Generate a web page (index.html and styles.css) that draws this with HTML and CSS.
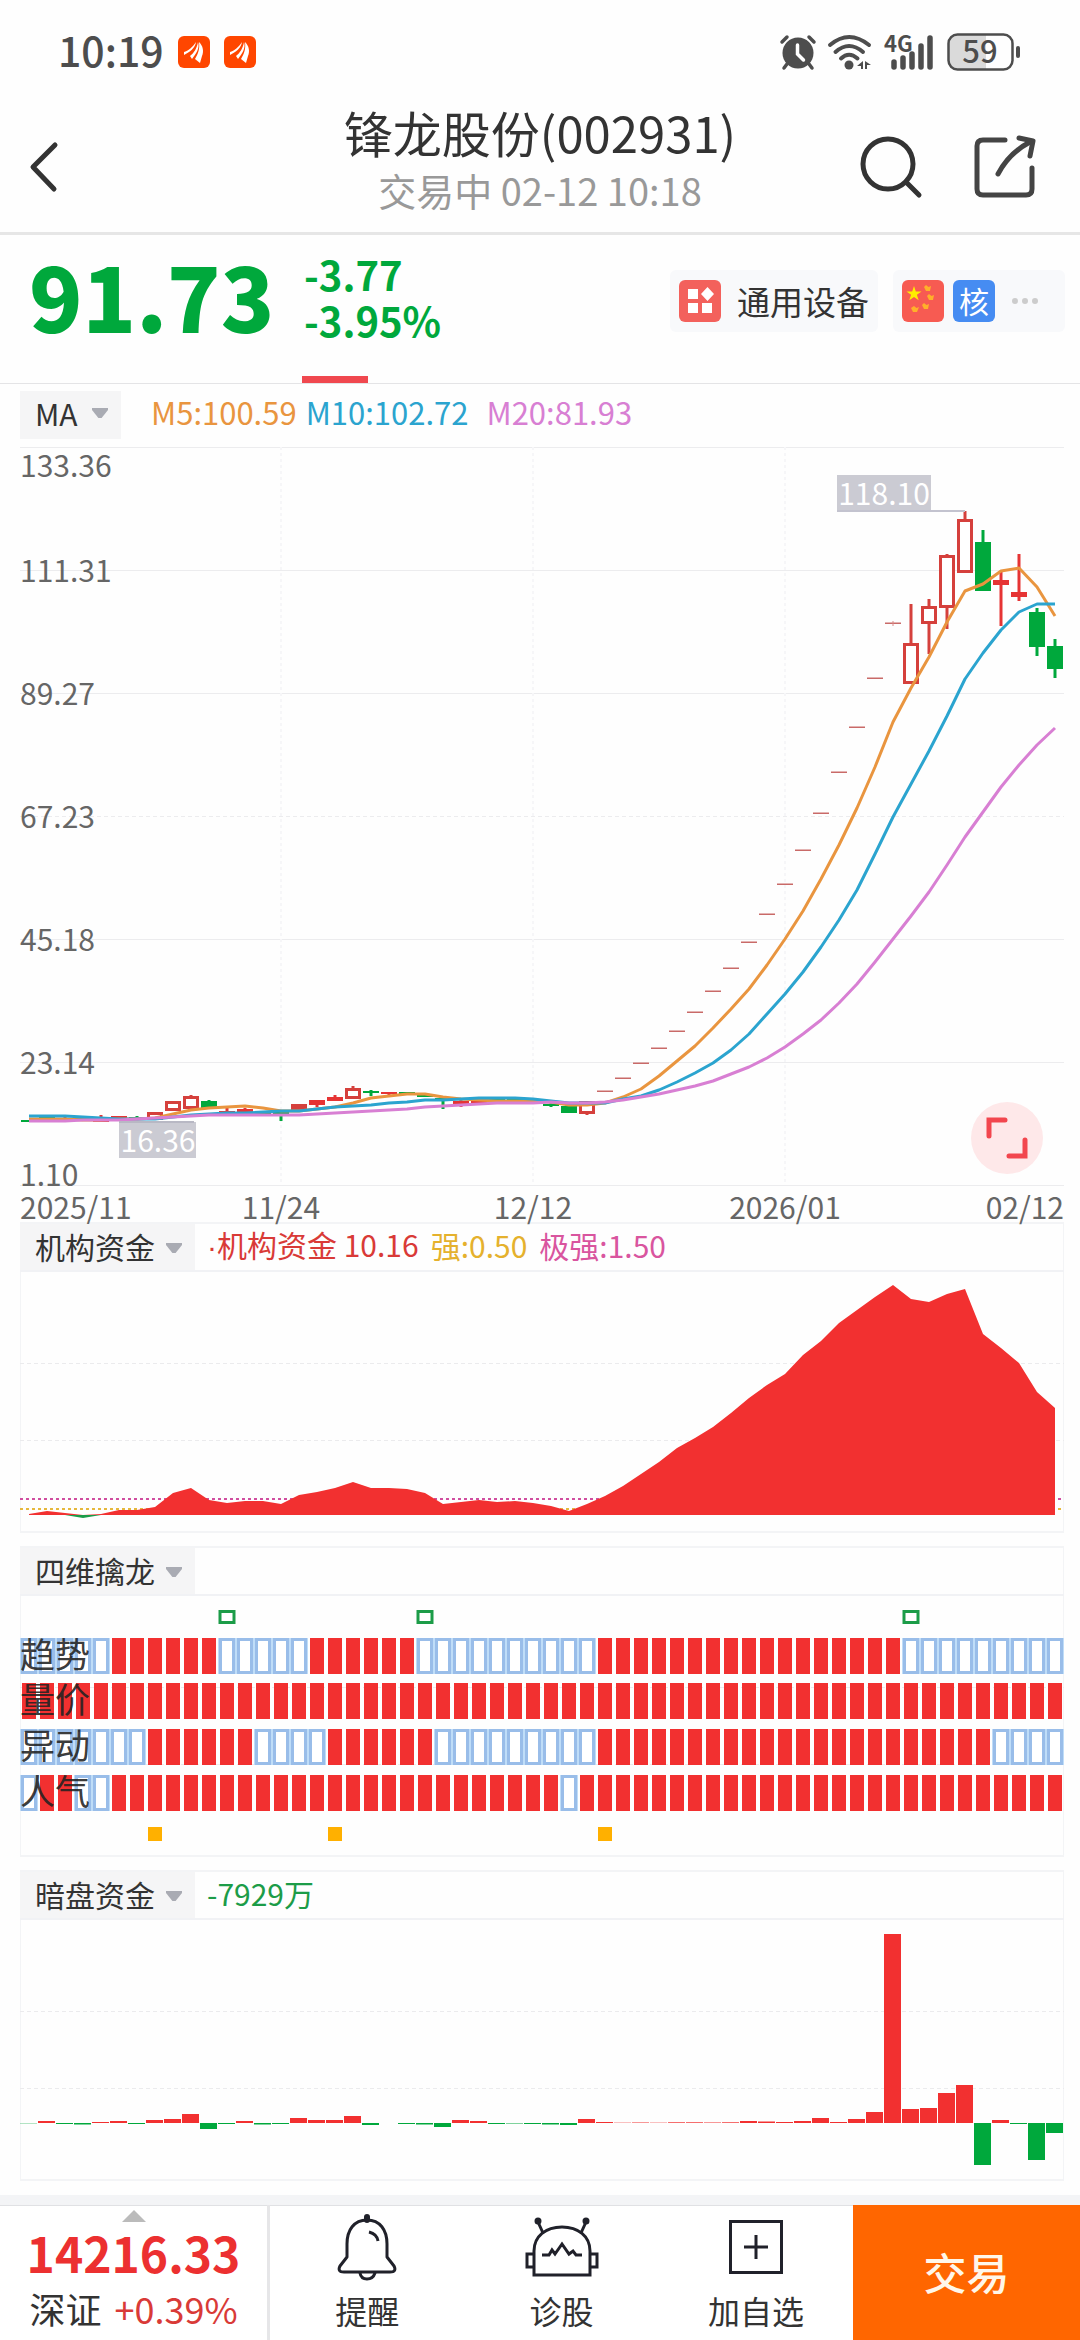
FILE: index.html
```
<!doctype html>
<html lang="zh-CN">
 <head>
  <meta charset="utf-8">
  <meta name="viewport" content="width=device-width, initial-scale=1.0">
  <title>锋龙股份(002931)</title>
  <link rel="stylesheet" href="styles.css">
 </head>
 <body>
  <header class="top">
   <div class="status-bar">
    <div class="status-left">
     <span class="clock">10:19</span>
     <svg class="app-icon" viewBox="0 0 32 32">
      <rect width="32" height="32" rx="6" fill="#ff4600"/>
      <path d="M6 16c4-1 9-5 12-10-1 6-6 10-12 13zM12 20c4-3 7-8 8-14 2 6-2 12-6 17zM17 23c3-5 5-10 4-17 4 4 5 9 3 14l-2 7z" fill="#fff"/>
     </svg>
     <svg class="app-icon" viewBox="0 0 32 32">
      <rect width="32" height="32" rx="6" fill="#ff4600"/>
      <path d="M6 16c4-1 9-5 12-10-1 6-6 10-12 13zM12 20c4-3 7-8 8-14 2 6-2 12-6 17zM17 23c3-5 5-10 4-17 4 4 5 9 3 14l-2 7z" fill="#fff"/>
     </svg>
    </div>
    <div class="status-right">
     <svg width="36" height="36" viewBox="0 0 36 36" fill="none" stroke="#4d4d4d" stroke-linecap="round">
      <circle cx="18" cy="19" r="15.500" fill="#4d4d4d" stroke="none"/>
      <path d="M2 8l5-5M34 8l-5-5M7 30l-3 4M29 30l3 4" stroke-width="3.500"/>
      <path d="M17.500 11v9l6 6" stroke="#fff" stroke-width="3.500"/>
     </svg>
     <svg width="46" height="36" viewBox="0 0 46 36" fill="none" stroke="#4d4d4d" stroke-width="4" stroke-linecap="round">
      <path d="M3 11Q22-5 42 11M8.500 18Q22 6 36 18M14 24.500Q22 17 30.500 24.500"/>
      <circle cx="22" cy="31" r="4.500" fill="#4d4d4d" stroke="none"/>
      <path d="M36 27v8h-2v-3h-4zM38 27l6 4h-4v4h-2z" fill="#4d4d4d" stroke="none"/>
     </svg>
     <svg width="52" height="36" viewBox="0 0 52 36">
      <text class="net" x="0" y="18">4G</text>
      <path d="M10 28v5M19 24v9M28 20v13M37 12v21M46 4v29" stroke="#4d4d4d" stroke-width="5.500" stroke-linecap="round"/>
     </svg>
     <svg width="74" height="38" viewBox="0 0 74 38">
      <path d="M11 2h28v34H11q-9 0-9-9V11q0-9 9-9z" fill="#dadada"/>
      <rect x="1.500" y="1.500" width="64" height="35" rx="9" fill="none" stroke="#4d4d4d" stroke-width="2.500"/>
      <rect x="69" y="13" width="4" height="12" rx="2" fill="#4d4d4d"/>
      <text class="battery" x="33" y="30">59</text>
     </svg>
    </div>
   </div>
   <div class="title-bar">
    <button class="icon-btn back" aria-label="返回">
     <svg width="28" height="50" viewBox="0 0 28 50"><path d="M25 3L3 25l21 22" fill="none" stroke="#333" stroke-width="5" stroke-linecap="round" stroke-linejoin="round"/></svg>
    </button>
    <div class="title">
     <h1>锋龙股份(002931)</h1>
     <p>交易中 02-12 10:18</p>
    </div>
    <div class="title-actions">
     <button class="icon-btn" aria-label="搜索">
      <svg width="62" height="62" viewBox="0 0 62 62" fill="none" stroke="#333" stroke-width="5" stroke-linecap="round"><circle cx="28" cy="28" r="25"/><path d="M46 46l13 13"/></svg>
     </button>
     <button class="icon-btn" aria-label="分享">
      <svg width="62" height="62" viewBox="0 0 62 62" fill="none" stroke="#444" stroke-width="5" stroke-linecap="round" stroke-linejoin="round"><path d="M31 4H9q-6 0-6 6v43q0 6 6 6h43q6 0 6-6V32"/><path d="M24 38Q35 17 56 6"/><path d="M45 2l14 3-3 15"/></svg>
     </button>
    </div>
   </div>
  </header>

  <section class="quote">
   <strong class="price">91.73</strong>
   <div class="change">
    <div>-3.77</div>
    <div>-3.95%</div>
   </div>
   <div class="chips">
    <a class="chip" href="#">
     <svg class="chip-icon" viewBox="0 0 42 42"><rect width="42" height="42" rx="6" fill="#f3615c"/><path d="M9 9h10v10H9zM9 23h10v10H9zM23 23h10v10H23zM28.500 7l6.500 7-6.500 7-6.500-7z" fill="#fff"/></svg>
     <span>通用设备</span>
    </a>
    <a class="chip more" href="#" aria-label="更多题材">
     <svg class="chip-icon" viewBox="0 0 42 42">
      <rect width="42" height="42" rx="6" fill="#f75b52"/>
      <path d="M12 6l1.800 5.400h5.700l-4.600 3.400 1.800 5.500-4.700-3.400-4.700 3.400 1.800-5.500-4.600-3.400h5.700z" fill="#fff000"/>
      <g fill="#ffb02a">
       <path d="M24 5l2.500 2 2.500-1-1 5h-4l-2-4zM27 14l2.500 2 2.500-1-1 5h-4l-2-4zM22 23l2.500 2 2.500-1-1 5h-4l-2-4zM12 26l2.500 2 2.500-1-2 5h-4l-2-4z"/>
      </g>
     </svg>
     <span class="tag">核</span>
     <svg width="28" height="8" viewBox="0 0 28 8" fill="#ccc"><circle cx="4" cy="4" r="3"/><circle cx="14" cy="4" r="3"/><circle cx="24" cy="4" r="3"/></svg>
    </a>
   </div>
   <i class="tab-mark"></i>
  </section>

  <main class="charts">
   <div class="ma-row">
    <label class="picker"><select aria-label="主图指标"><option>MA</option></select></label>
    <span class="m5">M5:100.59</span>
    <span class="m10">M10:102.72</span>
    <span class="m20">M20:81.93</span>
   </div>
   <div class="kline">
    <svg id="kline" viewBox="0 0 1044 775"></svg>
    <button class="expand" aria-label="全屏">
     <svg width="42" height="42" viewBox="0 0 42 42" fill="none" stroke="#f2464e" stroke-width="5" stroke-linecap="round"><path d="M3 19V3h16M39 23v16H23"/></svg>
    </button>
   </div>

   <section class="panel">
    <div class="panel-head">
     <label class="picker"><select aria-label="副图指标一"><option>机构资金</option></select></label>
     <span class="legend red"><span class="dot">·</span>机构资金 10.16</span>
     <span class="legend yellow">强:0.50</span>
     <span class="legend pink">极强:1.50</span>
    </div>
    <svg id="funds" viewBox="0 0 1044 259"></svg>
   </section>

   <section class="panel">
    <div class="panel-head">
     <label class="picker"><select aria-label="副图指标二"><option>四维擒龙</option></select></label>
    </div>
    <svg id="dragon" viewBox="0 0 1044 259"></svg>
   </section>

   <section class="panel">
    <div class="panel-head">
     <label class="picker"><select aria-label="副图指标三"><option>暗盘资金</option></select></label>
     <span class="legend green">-7929万</span>
    </div>
    <svg id="dark" viewBox="0 0 1044 259"></svg>
   </section>
  </main>

  <footer class="bottom">
   <a class="index" href="#">
    <i class="up"></i>
    <strong>14216.33</strong>
    <span class="index-change">深证 <em>+0.39%</em></span>
   </a>
   <nav class="actions">
    <button>
     <svg width="66" height="66" viewBox="0 0 66 66" fill="none" stroke="#20212a" stroke-width="3" stroke-linejoin="round" stroke-linecap="round">
      <path d="M33 6C20 6 13 16 13 30v13L6 52q-3 6 4 6h46q7 0 4-6l-7-9V30C53 16 46 6 33 6z"/>
      <path d="M33 3v3" stroke-width="6"/><path d="M26 59q1 6 7 6t8-6"/><path d="M35 18q8 2 9 9" stroke-linecap="butt"/>
     </svg>
     <span>提醒</span>
    </button>
    <button>
     <svg width="74" height="66" viewBox="0 0 74 66" fill="none" stroke="#20212a" stroke-width="3">
      <path d="M9 61V37C9 22 21 13 37 13s28 9 28 24v24zM8 40H2v13h6M66 40h6v13h-6M18 19L13 8M56 19l5-11"/>
      <circle cx="13" cy="7" r="2" fill="#20212a"/><circle cx="61" cy="7" r="2" fill="#20212a"/>
      <path d="M17 41h7l3-5 3 4 7-10 7 10 4-3 3 4h6"/>
     </svg>
     <span>诊股</span>
    </button>
    <button>
     <svg width="66" height="66" viewBox="0 0 66 66" fill="none" stroke="#20212a" stroke-width="3"><path d="M7.500 7.500h51v51h-51zM21 33h24M33 21v24"/></svg>
     <span>加自选</span>
    </button>
   </nav>
   <button class="trade">交易</button>
  </footer>
  <script src="charts.js"></script>
 </body>
</html>
```

FILE: styles.css
```
* {
	box-sizing: border-box;
}

body {
	margin: 0;
	min-height: 100vh;
	display: flex;
	flex-direction: column;
	background: #fefefe;
	color: #333;
	font-family: "Noto Sans CJK SC", "Noto Sans", sans-serif;
	font-size: 30px;
}

button {
	border: 0;
	padding: 0;
	background: none;
	color: inherit;
	font: inherit;
}

a {
	color: inherit;
	text-decoration: none;
}

svg {
	display: block;
	overflow: visible;
}

/* status bar + title */
.top {
	border-bottom: 3px solid #e6e6e6;
}

.status-bar {
	height: 97px;
	padding: 7px 59px 0 58px;
	display: flex;
	justify-content: space-between;
	align-items: center;
	color: #4d4d4d;
}

.status-left,
.status-right {
	display: flex;
	align-items: center;
}

.status-left {
	gap: 14px;
}

.status-right {
	gap: 11px;
}

.clock {
	font-size: 41px;
	line-height: 56px;
	font-weight: 500;
	margin-top: -6px;
}

.app-icon {
	width: 32px;
	height: 32px;
}

.net {
	font-size: 22px;
	font-weight: 700;
	fill: #4d4d4d;
}

.battery {
	font-size: 31px;
	font-weight: 500;
	text-anchor: middle;
	fill: #4d4d4d;
}

.title-bar {
	height: 135px;
	padding: 5px 30px 0;
	display: grid;
	grid-template-columns: 1fr auto 1fr;
	align-items: center;
}

.back {
	justify-self: start;
}

.title {
	padding-bottom: 14px;
	text-align: center;
}

.title h1 {
	margin: 0;
	font-size: 49px;
	line-height: 60px;
	font-weight: 400;
}

.title p {
	margin: 0;
	font-size: 38px;
	line-height: 56px;
	color: #999;
}

.title-actions {
	display: flex;
	justify-content: flex-end;
	gap: 52px;
	padding-right: 14px;
}

/* price */
.quote {
	position: relative;
	height: 149px;
	padding: 0 15px 21px 29px;
	display: flex;
	align-items: center;
	border-bottom: 1px solid #e4e4e6;
	color: #00a83c;
	font-weight: 700;
}

.price {
	min-width: 275px;
	padding-bottom: 8px;
	font-size: 88px;
	line-height: 100px;
}

.change {
	padding-bottom: 4px;
	font-size: 40px;
	line-height: 46px;
}

.chips {
	margin-left: auto;
	padding-top: 4px;
	display: flex;
	gap: 15px;
	color: #333;
	font-weight: 400;
}

.chip {
	height: 62px;
	padding: 0 9px;
	display: flex;
	align-items: center;
	gap: 16px;
	border-radius: 6px;
	background: #f8f9fb;
	font-size: 33px;
	line-height: 42px;
}

.more {
	gap: 9px;
	padding-right: 26px;
}

.more svg:last-child {
	margin-left: 7px;
}

.chip-icon,
.tag {
	width: 42px;
	height: 42px;
}

.tag {
	border-radius: 6px;
	background: #468cf2;
	color: #fff;
	font-size: 30px;
	line-height: 40px;
	text-align: center;
}

.tab-mark {
	position: absolute;
	left: 28%;
	bottom: 0;
	width: 66px;
	height: 7px;
	background: #f0484f;
}

/* charts */
.charts {
	padding: 5px 16px 0 20px;
}

.charts svg {
	width: 100%;
	height: auto;
}

.ma-row {
	display: flex;
	align-items: center;
	margin-bottom: 10px;
	font-size: 31px;
	line-height: 48px;
}

.ma-row .picker {
	width: 101px;
	margin-right: 30px;
}

.m5,
.m10,
.m20 {
	padding-bottom: 2px;
	line-height: 46px;
}

.m5 {
	color: #e9953f;
	margin-right: 9px;
}

.m10 {
	color: #2ba4cf;
	margin-right: 18px;
}

.m20 {
	color: #d87fd3;
}

.picker {
	position: relative;
	width: 175px;
	height: 48px;
	flex: none;
}

.picker select {
	width: 100%;
	height: 100%;
	padding: 0 0 3px 15px;
	appearance: none;
	border: 0;
	border-radius: 0;
	background: #f5f5f6;
	color: #333;
	font: inherit;
	font-size: 30px;
	line-height: 44px;
}

.picker::after {
	content: "";
	position: absolute;
	right: 13px;
	top: 19px;
	width: 16px;
	height: 10px;
	background: #a9abb3;
	clip-path: polygon(0 0, 100% 0, 100% 20%, 60% 100%, 40% 100%, 0 20%);
	pointer-events: none;
}

.kline {
	position: relative;
}

.charts .expand {
	position: absolute;
	right: 2%;
	bottom: 48px;
	width: 72px;
	height: 72px;
	border-radius: 50%;
	background: #fee8e9;
}

.charts .expand svg {
	width: 42px;
	margin: 0 auto;
}

.axis {
	font-size: 30px;
	fill: #666;
}

.callout {
	font-size: 30px;
	text-anchor: middle;
	fill: #fff;
}

.row-name {
	font-size: 35px;
	fill: #222;
	fill-opacity: 0.9;
}

.panel {
	margin-bottom: 13px;
	border: 2px solid #f3f4f6;
	border-width: 2px 0;
	box-shadow: inset 1px 0 #f3f4f6, inset -1px 0 #f3f4f6;
}

.panel-head {
	display: flex;
	align-items: center;
	height: 48px;
	border-bottom: 2px solid #f1f2f5;
}

.panel-head .picker {
	height: 46px;
	margin-right: 12px;
}

.legend {
	margin-right: 12px;
	padding-bottom: 3px;
	line-height: 43px;
}

.dot {
	font-family: "Liberation Sans", sans-serif;
}

.red { color: #d93a37; }
.yellow { color: #e5b12d; }
.pink { color: #d9559f; }
.green { color: #1c9c48; }

/* bottom bar */
.bottom {
	display: flex;
	height: 145px;
	margin-top: auto;
	border-top: 10px solid #f3f4f6;
	background: #fff;
	box-shadow: inset 0 1px #e0e1e4;
}

.index {
	flex: 0 0 25%;
	display: flex;
	flex-direction: column;
	align-items: center;
	padding-top: 5px;
	border-right: 3px solid #e6e6e8;
}

.up {
	border: 12px solid transparent;
	border-top-width: 0;
	border-bottom-color: #bbb;
}

.index strong {
	font-size: 48px;
	line-height: 60px;
	color: #ec3030;
}

.index-change {
	display: flex;
	gap: 13px;
	font-size: 36px;
	line-height: 52px;
}

.index-change em {
	font-style: normal;
	color: #d93a37;
}

.actions {
	flex: 1;
	display: grid;
	grid-template-columns: repeat(3, 1fr);
}

.actions button {
	display: flex;
	flex-direction: column;
	align-items: center;
	padding-top: 9px;
	gap: 9px;
	font-size: 32px;
	line-height: 42px;
}

.trade {
	flex: 0 0 21%;
	padding-bottom: 4px;
	background: #ff6600;
	color: #fff7ea;
	font-size: 43px;
	font-weight: 500;
}
```

FILE: charts.js
```
// every chart is 1044 units wide: 58 days, 18 units per day
const STEP = 18
const RED = "#f23030"
const GREEN = "#00a83c"
const mid = i => 9 + STEP * i

const rect = (x, y, w, h, attrs) => `<rect x="${x}" y="${y}" width="${w}" height="${h}" ${attrs}/>`
const line = (x1, y1, x2, y2, attrs) => `<path d="M${x1} ${y1}L${x2} ${y2}" ${attrs}/>`
const text = (x, y, cls, str, attrs = "") => `<text x="${x}" y="${y}" class="${cls}" ${attrs}>${str}</text>`
const points = list => list.map((y, i) => `${mid(i)},${y}`).join(" ")

// [day, body top, body bottom, high, low, kind]  h = hollow, r = red, g = green
const candles = [
	[0, 673, 675, 673, 675, "g"], [1, 670, 672, 670, 673, "g"], [2, 671, 673, 670, 673, "r"],
	[3, 671, 673, 670, 674, "g"], [4, 672, 675, 668, 675, "r"], [5, 669, 671, 669, 672, "r"],
	[6, 670, 672, 669, 672, "g"], [7, 665, 673, 665, 673, "h"], [8, 654, 664, 654, 664, "h"],
	[9, 649, 662, 648, 662, "h"], [10, 654, 662, 653, 662, "g"], [11, 664, 666, 661, 668, "r"],
	[12, 662, 665, 661, 665, "r"], [13, 665, 667, 664, 667, "g"], [14, 665, 667, 664, 674, "g"],
	[15, 657, 663, 657, 663, "h"], [16, 653, 658, 653, 660, "r"], [17, 650, 654, 648, 654, "r"],
	[18, 641, 652, 639, 652, "h"], [19, 644, 646, 643, 649, "g"], [20, 645, 647, 645, 648, "r"],
	[21, 645, 647, 645, 648, "g"], [22, 648, 650, 647, 650, "g"], [23, 651, 653, 650, 662, "g"],
	[24, 654, 657, 653, 660, "r"], [25, 654, 656, 653, 657, "r"], [26, 652, 654, 652, 655, "g"],
	[27, 652, 654, 652, 657, "g"], [28, 653, 655, 652, 655, "r"], [29, 657, 659, 656, 660, "g"],
	[30, 659, 666, 659, 666, "g"], [31, 654, 667, 654, 668, "h"],
	[49, 196, 237, 157, 237, "h"], [50, 159, 177, 152, 207, "h"], [51, 108, 161, 107, 182, "h"],
	[52, 72, 126, 64, 126, "h"], [53, 95, 144, 83, 144, "g"], [54, 133, 138, 125, 179, "r"],
	[55, 145, 150, 107, 154, "r"], [56, 165, 200, 161, 209, "g"], [57, 199, 222, 192, 231, "g"]
]

// limit-up days, open = close, from day 32
const limitUps = [644, 631, 616, 601, 584, 565, 544, 521, 495, 467, 437, 403, 366, 325, 280, 231, 176]

const ma5 = [672, 672, 672, 673, 673, 672, 672, 671, 667, 663, 661, 660, 659, 661, 664, 664, 662, 660, 656, 651, 649, 647, 647, 650, 652, 653, 654, 654, 654, 655, 658, 658, 656, 650, 642, 629, 614, 599, 581, 562, 542, 518, 492, 464, 432, 398, 361, 320, 275, 241, 210, 175, 144, 137, 124, 121, 140, 169]
const ma10 = [669, 669, 669, 670, 671, 672, 672, 672, 670, 668, 667, 666, 666, 665, 664, 664, 662, 660, 659, 658, 656, 655, 653, 653, 652, 651, 651, 651, 652, 654, 656, 656, 656, 652, 649, 643, 635, 626, 616, 603, 587, 567, 547, 525, 500, 473, 443, 407, 370, 337, 304, 269, 232, 206, 183, 165, 157, 157]
const ma20 = [674, 674, 674, 673, 673, 673, 672, 671, 670, 669, 668, 668, 668, 668, 668, 668, 667, 666, 665, 664, 663, 662, 660, 659, 658, 657, 656, 656, 656, 655, 656, 656, 655, 653, 650, 647, 643, 639, 634, 627, 620, 611, 600, 587, 573, 556, 537, 515, 492, 469, 445, 418, 390, 365, 340, 318, 298, 281]

function drawKline() {
	let out = ""
	for (let i = 0; i < 7; i++) {
		out += line(0, 123 * i + 0.5, 1044, 123 * i + 0.5, `stroke="#ececee" ${i === 3 ? 'stroke-dasharray="4 3"' : ""}`)
	}
	for (const day of [14, 28, 42]) {
		out += line(mid(day), 0, mid(day), 738, 'stroke="#f6f6f8" stroke-width="2" stroke-dasharray="3 3"')
	}

	for (const [i, top, bottom, high, low, kind] of candles) {
		const color = kind === "g" ? GREEN : kind === "h" ? "#d5403c" : "#e63434"
		const x = mid(i)
		const wick = `stroke="${color}" stroke-width="3"`
		if (high < top) out += line(x, high, x, top, wick)
		if (low > bottom) out += line(x, bottom, x, low, wick)
		if (kind === "h") {
			out += rect(x - 6.5, top + 1.5, 13, bottom - top - 3, `fill="#fff" stroke="${color}" stroke-width="3"`)
		} else {
			out += rect(x - 8, top, 16, bottom - top, `fill="${color}"`)
		}
	}
	limitUps.forEach((y, k) => {
		out += rect(mid(32 + k) - 8, y - 0.5, 16, 1.5, 'fill="#c96a68"')
	})
	out += line(mid(48), 174, mid(48), 179, 'stroke="#d98a88"')

	for (const [list, color] of [[ma5, "#e9953f"], [ma10, "#2ba4cf"], [ma20, "#d87fd3"]]) {
		out += `<polyline points="${points(list)}" fill="none" stroke="${color}" stroke-width="3" stroke-linejoin="round"/>`
	}

	// highest and lowest price
	out += rect(817, 28, 94, 36, 'fill="#cbcbd3"') + line(817, 64, 945, 64, 'stroke="#c3c3cf" stroke-width="2"')
	out += text(864, 58, "callout", "118.10")
	out += rect(99, 675, 77, 36, 'fill="#cbcbd3"') + line(99, 675, 174, 675, 'stroke="#b8b8c4" stroke-width="2"')
	out += text(138, 705, "callout", "16.36")

	out += text(0, 30, "axis", "133.36")
	;["111.31", "89.27", "67.23", "45.18", "23.14"].forEach((p, k) => {
		out += text(0, 123 * (k + 1) + 12, "axis", p)
	})
	out += text(0, 739, "axis", "1.10")

	out += text(0, 772, "axis", "2025/11")
	out += text(mid(14), 772, "axis", "11/24", 'text-anchor="middle"')
	out += text(mid(28), 772, "axis", "12/12", 'text-anchor="middle"')
	out += text(mid(42), 772, "axis", "2026/01", 'text-anchor="middle"')
	out += text(1044, 772, "axis", "02/12", 'text-anchor="end"')
	document.getElementById("kline").innerHTML = out
}

function panelGrid() {
	return [91, 168].map(y => line(0, y + 0.5, 1044, y + 0.5, 'stroke="#ebebed" stroke-dasharray="4 3"')).join("")
}

const funds = [242, 239, 241, 246, 242, 238, 238, 235, 221, 216, 228, 231, 229, 229, 232, 223, 220, 216, 210, 216, 216, 217, 221, 232, 230, 228, 230, 229, 231, 234, 239, 232, 224, 214, 202, 190, 176, 166, 155, 141, 126, 113, 102, 83, 69, 51, 38, 25, 13, 27, 30, 22, 17, 62, 76, 91, 120, 136]

function drawFunds() {
	const base = 243
	let out = panelGrid()
	out += line(0, 227, 1044, 227, 'stroke="#d04ea0" stroke-width="2" stroke-dasharray="3 3"')
	out += line(0, 237, 1044, 237, 'stroke="#e6b83c" stroke-width="2" stroke-dasharray="3 3"')
	const up = funds.map(y => Math.min(y, base))
	const down = funds.map(y => Math.max(y, base))
	out += `<polygon points="${mid(0)},${base} ${points(up)} ${mid(57)},${base}" fill="${RED}"/>`
	out += `<polygon points="${mid(0)},${base} ${points(down)} ${mid(57)},${base}" fill="#1c9c48"/>`
	document.getElementById("funds").innerHTML = out
}

// 1 = red, 0 = empty, as [value, days] runs
const rows = [
	{ name: "趋势", y: 42, runs: [[0, 5], [1, 6], [0, 5], [1, 6], [0, 10], [1, 17], [0, 9]] },
	{ name: "量价", y: 87, runs: [[1, 58]] },
	{ name: "异动", y: 133, runs: [[0, 7], [1, 6], [0, 4], [1, 6], [0, 9], [1, 22], [0, 4]] },
	{ name: "人气", y: 179, runs: [[0, 1], [1, 2], [0, 2], [1, 25], [0, 1], [1, 27]] }
]

function drawDragon() {
	let out = panelGrid()
	for (const i of [11, 22, 49]) {
		out += rect(mid(i) - 7, 15.5, 14, 11, 'fill="#fff" stroke="#1c9c48" stroke-width="3"')
	}
	for (const row of rows) {
		let i = 0
		for (const [on, days] of row.runs) {
			if (!on) out += rect(STEP * i, row.y, STEP * days, 36, 'fill="#bfddf8"')
			for (const end = i + days; i < end; i++) {
				out += on
					? rect(mid(i) - 7, row.y, 14, 36, `fill="${RED}"`)
					: rect(mid(i) - 6.5, row.y + 1.5, 13, 33, 'fill="#fff" stroke="#99bde9" stroke-width="3"')
			}
		}
		out += text(0, row.y + 30, "row-name", row.name)
	}
	for (const i of [7, 17, 32]) {
		out += rect(mid(i) - 7, 231, 14, 14, 'fill="#ffb000"')
	}
	document.getElementById("dragon").innerHTML = out
}

const dark = [-0.3, 2, -1, -1.5, 1, 2, -1, 3, 4, 9, -6, -1, 2, -1.5, -1, 5, 3, 3, 7, -2, 0, -1, -1.5, -4, 3, 2, -1, -0.5, -1, -1.5, -2, 4, 1, 0.3, 0.5, 0.3, 0.7, 0.7, 0.5, 0.7, 2, 1.5, 1, 2, 5, 1, 4, 11, 189, 14, 15, 30, 38, -42, 3, -1, -37, -10]

function drawDark() {
	let out = panelGrid()
	dark.forEach((v, i) => {
		out += rect(STEP * i, v > 0 ? 203 - v : 203, 17, Math.abs(v), `fill="${v > 0 ? RED : GREEN}"`)
	})
	document.getElementById("dark").innerHTML = out
}

drawKline()
drawFunds()
drawDragon()
drawDark()
```
